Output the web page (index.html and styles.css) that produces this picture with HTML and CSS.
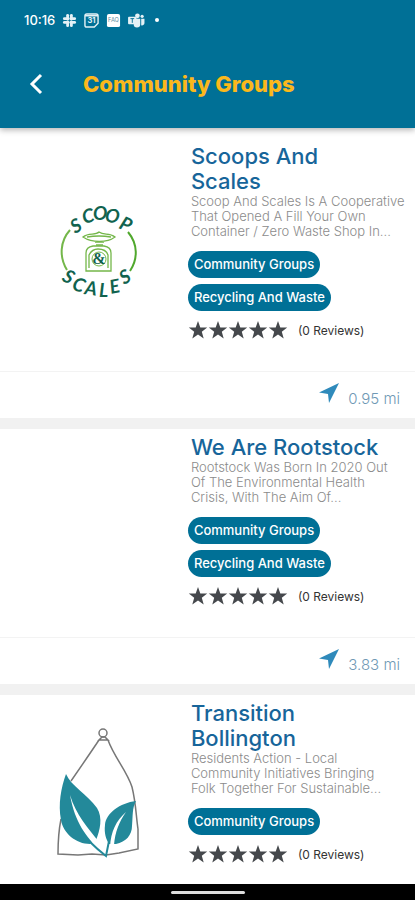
FILE: index.html
```html
<!DOCTYPE html>
<html lang="en">
<head>
  <meta charset="UTF-8" />
  <meta name="viewport" content="width=device-width, initial-scale=1.0" />
  <title>Community Groups</title>
  <link rel="stylesheet" href="styles.css">
</head>
<body>
  <!-- shared icons -->
  <svg class="sprite" aria-hidden="true">
    <symbol id="stars" viewBox="0 0 100 20">
      <path id="star" d="M10 1l2.3 6.4 6.9.2-5.4 4.2 1.9 6.7-5.7-3.9-5.7 3.9 1.9-6.7L.8 7.6l6.9-.2z" />
      <use href="#star" x="20" />
      <use href="#star" x="40" />
      <use href="#star" x="60" />
      <use href="#star" x="80" />
    </symbol>
    <symbol id="arrow" viewBox="0 0 20 20">
      <path d="M20 0L10 20 9 11 0 9.500z" />
    </symbol>
  </svg>

  <header class="app-header">
    <div class="status-bar">
      <span class="time">10:16</span>
      <svg viewBox="0 0 16 16" fill="#e4f1f6">
        <rect x="4.500" y="1" width="3" height="7" rx="1.500" /><rect x="8.500" y="1" width="3" height="7" rx="1.500" />
        <rect x="4.500" y="8" width="3" height="7" rx="1.500" /><rect x="8.500" y="8" width="3" height="7" rx="1.500" />
        <rect x="1" y="4.500" width="7" height="3" rx="1.500" /><rect x="8" y="4.500" width="7" height="3" rx="1.500" />
        <rect x="1" y="8.500" width="7" height="3" rx="1.500" /><rect x="8" y="8.500" width="7" height="3" rx="1.500" />
      </svg>
      <svg viewBox="0 0 16 16" fill="none" stroke="#e4f1f6" stroke-width="1.500">
        <path d="M3 1h10q2 0 2 2v8l-4 4H3q-2 0-2-2V3q0-2 2-2zM1 3h14" />
        <text x="8" y="11" font-size="8" font-weight="700" text-anchor="middle" fill="#e4f1f6" stroke="none">31</text>
      </svg>
      <svg viewBox="0 0 16 16">
        <rect x="1" y="1" width="14" height="14" rx="2" fill="#fff" />
        <text x="8" y="10" font-size="6" text-anchor="middle" fill="#5f8fa3">FAQ</text>
      </svg>
      <svg class="teams" viewBox="0 0 18 16" fill="#e4f1f6">
        <circle cx="10" cy="3" r="2.500" /><circle cx="15" cy="3.500" r="1.700" />
        <path d="M6 6h7v6a3.500 3.500 0 0 1-7 0zM14 6h3.500v5a2.500 2.500 0 0 1-3.500 2z" />
        <rect x="0" y="4" width="9" height="8" rx="1" />
        <path d="M2.500 6h4M4.500 6v4.500" stroke="#007096" fill="none" />
      </svg>
      <span class="dot"></span>
    </div>
    <div class="title-bar">
      <button class="back" aria-label="Back">
        <svg viewBox="0 0 14 22"><path d="M12 2L3 11l9 9" /></svg>
      </button>
      <h1>Community Groups</h1>
    </div>
  </header>

  <main class="groups">
    <article class="card">
      <div class="card-body">
        <div class="picture">
          <svg class="logo-scoop" viewBox="0 0 90 100" role="img" aria-label="Scoop &amp; Scales">
            <g class="scoop-text">
              <text x="21 30 39 50 64" y="32 22 18 19 26" rotate="-30 -15 0 12 25">SCOOP</text>
              <text x="7 17 30 45 57 70" y="78 87 92 95 92 83" rotate="30 20 8 0 -12 -30">SCALES</text>
            </g>
            <g fill="none" stroke="#74b74a" stroke-width="1.300">
              <path d="M16 28C6 39 5 55 13 68" stroke-width="2" />
              <path d="M74 30C84 42 84 57 76 69" stroke-width="2" stroke="#50a82d" />
              <path d="M29 35C35 30 41 34 45 30 50 34 55 30 61 35 53 41 38 41 29 35zM33 35Q45 33 57 35M41 40h9M42 43h7" />
              <path d="M32 69V51Q32 45 39 44H50Q57 45 57 51V69zM35 66V53Q38 47 44 47 52 47 54 53V66" />
              <circle cx="45" cy="57" r="7" stroke-width="1" />
            </g>
            <text x="45" y="62" class="ampersand">&amp;</text>
          </svg>
        </div>
        <div class="info">
          <h2>Scoops And<br>Scales</h2>
          <p class="description">Scoop And Scales Is A Cooperative<br>That Opened A Fill Your Own<br>Container / Zero Waste Shop In...</p>
          <div class="tags">
            <span class="tag">Community Groups</span>
            <span class="tag">Recycling And Waste</span>
          </div>
          <div class="rating">
            <svg class="stars"><use href="#stars" /></svg>
            <span>(0 Reviews)</span>
          </div>
        </div>
      </div>
      <div class="card-footer">
        <svg class="arrow"><use href="#arrow" /></svg>
        <span>0.95 mi</span>
      </div>
    </article>

    <article class="card">
      <div class="card-body">
        <div class="picture"></div>
        <div class="info">
          <h2>We Are Rootstock</h2>
          <p class="description">Rootstock Was Born In 2020 Out<br>Of The Environmental Health<br>Crisis, With The Aim Of...</p>
          <div class="tags">
            <span class="tag">Community Groups</span>
            <span class="tag">Recycling And Waste</span>
          </div>
          <div class="rating">
            <svg class="stars"><use href="#stars" /></svg>
            <span>(0 Reviews)</span>
          </div>
        </div>
      </div>
      <div class="card-footer">
        <svg class="arrow"><use href="#arrow" /></svg>
        <span>3.83 mi</span>
      </div>
    </article>

    <article class="card">
      <div class="card-body">
        <div class="picture">
          <svg class="logo-leaf" viewBox="0 0 90 130" role="img" aria-label="Transition Bollington">
            <g fill="none" stroke="#777" stroke-width="1.500">
              <circle cx="49" cy="5" r="4" />
              <path d="M45 12l3-3h3l3 3zM45 12C37 24 26 40 17 53M54 12C60 29 73 43 78 59 82 75 82 88 84 101L84 121 65 125 52 127 38 126 24 127 4 126C4 113 5 101 7 91" />
            </g>
            <path d="M12 46C17 58 33 66 43 80 49 90 46 102 42 112L36 116C22 116 9 105 7 92 4 76 7 60 12 46z" fill="#23899a" />
            <path d="M82 73C66 75 52 85 51 97 50 105 52 111 55 116H62C72 114 78 107 78 98 79 88 78 80 82 73z" fill="#23899a" />
            <path d="M16 67C22 87 34 100 45 114L51 120 46 123C32 108 21 95 16 67z" fill="#fff" />
            <path d="M72 84C62 93 57 103 56 119L60 117C61 104 65 94 72 84z" fill="#fff" />
            <path d="M35 113Q43 121 52 128L55 113" fill="none" stroke="#23899a" stroke-width="2" />
          </svg>
        </div>
        <div class="info">
          <h2>Transition<br>Bollington</h2>
          <p class="description">Residents Action - Local<br>Community Initiatives Bringing<br>Folk Together For Sustainable...</p>
          <div class="tags">
            <span class="tag">Community Groups</span>
          </div>
          <div class="rating">
            <svg class="stars"><use href="#stars" /></svg>
            <span>(0 Reviews)</span>
          </div>
        </div>
      </div>
    </article>
  </main>

  <div class="nav-bar"><span class="handle"></span></div>
</body>
</html>
```
FILE: styles.css
```css
* {
  box-sizing: border-box;
}
body {
  display: flex;
  flex-direction: column;
  height: 100vh;
  margin: 0;
  background: #fff;
  font-family: Inter, "Noto Sans", sans-serif;
}
.sprite {
  position: absolute;
  width: 0;
  height: 0;
}

/* header */
.app-header {
  flex-shrink: 0;
  padding: 10px 24px 24px;
  background: #007096;
  color: #fff;
  box-shadow: 0 2px 6px rgba(0, 0, 0, 0.3);
  z-index: 1;
}
.status-bar {
  display: flex;
  align-items: center;
  gap: 7px;
  height: 20px;
}
.status-bar svg {
  width: 15px;
  height: 15px;
}
.status-bar .teams {
  width: 17px;
}
.time {
  font-size: 13px;
  font-weight: 500;
}
.dot {
  width: 4px;
  height: 4px;
  margin-left: 3px;
  border-radius: 50%;
  background: #fff;
}
.title-bar {
  display: flex;
  align-items: center;
  gap: 35px;
  height: 40px;
  margin-top: 34px;
}
.back {
  display: flex;
  padding: 0 5px;
  border: none;
  background: none;
  cursor: pointer;
}
.back svg {
  width: 14px;
  height: 22px;
  fill: none;
  stroke: #fff;
  stroke-width: 3px;
}
h1 {
  margin: 0;
  color: #fbb81b;
  font-size: 22px;
  font-weight: 800;
  line-height: 28px;
}

/* list */
.groups {
  flex: 1;
  min-height: 0;
  padding-top: 10px;
  overflow-y: auto;
  scrollbar-width: none;
}
.card + .card {
  border-top: 11px solid #f1f1f1;
}
.card-body {
  display: flex;
  padding: 6px 0 31px;
}
.picture {
  display: flex;
  flex: 0 0 46%;
  align-items: center;
  justify-content: center;
  padding: 20px 0 0 8px;
}
.logo-scoop {
  width: 90px;
  height: 100px;
}
.logo-leaf {
  width: 90px;
  height: 130px;
}
.scoop-text {
  fill: #11634e;
  font-family: Lato, sans-serif;
  font-size: 19px;
  font-style: italic;
  font-weight: 700;
}
.ampersand {
  fill: #11634e;
  font-family: "Liberation Serif", serif;
  font-size: 16px;
  font-weight: 700;
  text-anchor: middle;
}
.info {
  flex: 1;
  min-width: 0;
  white-space: nowrap;
}
h2 {
  margin: 0;
  color: #17659a;
  font-size: 22px;
  font-weight: 500;
  line-height: 25px;
}
.description {
  margin: 0 0 12px;
  color: #8b8b8b;
  font-size: 13px;
  font-weight: 300;
  line-height: 15px;
}
.tags {
  display: flex;
  flex-direction: column;
  align-items: flex-start;
  gap: 6px;
  margin-left: -3px;
}
.tag {
  padding: 0 6px;
  border-radius: 14px;
  background: #007096;
  color: #fff;
  font-size: 13px;
  font-weight: 500;
  line-height: 27px;
}
.rating {
  display: flex;
  align-items: center;
  gap: 10px;
  height: 20px;
  margin: 9px 0 0 -3px;
  color: #333;
  font-size: 12px;
}
.stars {
  width: 100px;
  height: 20px;
  fill: #45484c;
}
.card-footer {
  display: flex;
  align-items: center;
  justify-content: flex-end;
  gap: 9px;
  height: 47px;
  padding-right: 15px;
  border-top: 1px solid #f3f3f3;
  color: #7099b5;
  font-size: 15px;
  font-weight: 300;
}
.card-footer span {
  padding-top: 6px;
}
.arrow {
  width: 20px;
  height: 20px;
  margin-bottom: 5px;
  fill: #2f8abb;
}

/* system navigation */
.nav-bar {
  display: flex;
  flex-shrink: 0;
  align-items: center;
  justify-content: center;
  height: 16px;
  background: #000;
}
.handle {
  width: 74px;
  height: 3px;
  border-radius: 2px;
  background: #ddd;
}
```
